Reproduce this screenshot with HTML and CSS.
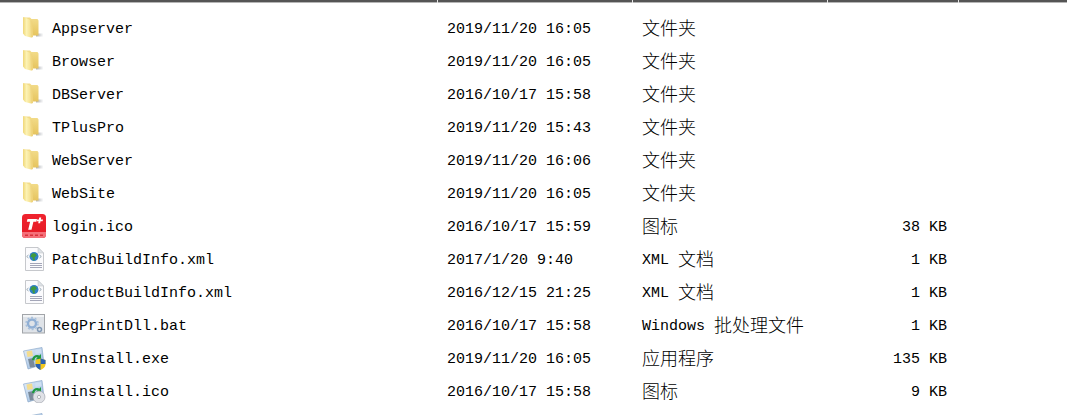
FILE: index.html
```html
<!DOCTYPE html>
<html lang="zh-CN">
<head>
<meta charset="utf-8">
<title>文件列表</title>
<link rel="stylesheet" href="styles.css">
</head>
<body>
<svg class="defs" width="0" height="0" aria-hidden="true">
  <defs>
    <linearGradient id="fback" x1="0" y1="0" x2="0" y2="1"><stop offset="0" stop-color="#f3dd8c"/><stop offset="1" stop-color="#e6c45e"/></linearGradient>
    <linearGradient id="ffront" x1="0" y1="0" x2="1" y2="0"><stop offset="0" stop-color="#f0d777"/><stop offset=".35" stop-color="#fcf2b4"/><stop offset="1" stop-color="#f0d67a"/></linearGradient>
    <linearGradient id="fshadow" x1="0" y1="0" x2="1" y2="0"><stop offset="0" stop-color="#a9adb3"/><stop offset="1" stop-color="#ffffff"/></linearGradient>
    <linearGradient id="red" x1="0" y1="0" x2="0" y2="1"><stop offset="0" stop-color="#f0232e"/><stop offset="1" stop-color="#e41a25"/></linearGradient>
    <linearGradient id="glass" x1="0" y1="0" x2="1" y2="1"><stop offset="0" stop-color="#e6f0fb"/><stop offset="1" stop-color="#8fb3dc"/></linearGradient>
    <symbol id="i-folder" viewBox="0 0 24 24">
      <path d="M14 17.500H21.500V20.500H14Z" fill="url(#fshadow)"/>
      <path d="M2 1.500H8L9.500 3H15.500L16.500 4.500V19.500H6L2 17Z" fill="url(#fback)"/>
      <path d="M1 1C4 2 8 3 10 5.500L11 21 9 21.500 3 20 1 17.500Z" fill="url(#ffront)"/>
      <path d="M10 5.500 11 21 9 21.500 8.300 4Z" fill="#eed27a" opacity=".7"/>
    </symbol>
    <symbol id="i-tplus" viewBox="0 0 24 24">
      <rect x="0" y="0" width="24" height="24" rx="3.500" fill="url(#red)"/>
      <path d="M0 18H24V20.500A3.500 3.500 0 0 1 20.500 24H3.500A3.500 3.500 0 0 1 0 20.500Z" fill="#f4717a"/>
      <path d="M5.500 5H15L14.300 7.800H11.400L9.500 15.800H6.200L8.100 7.800H4.800Z" fill="#fff"/>
      <path d="M17.200 3.500H19.200L18.900 5.500H21L20.600 7.300H18.500L18.100 9.300H16.200L16.600 7.300H14.600L15 5.500H16.900Z" fill="#fff"/>
      <path d="M3 20.500h3v1.500H3zM8 20.500h3v1.500H8zM13 20.500h3v1.500h-3zM18 20.500h3v1.500h-3z" fill="#d9303a"/>
    </symbol>
    <symbol id="i-xml" viewBox="0 0 24 24">
      <path d="M3.500 .5H16L21.500 6V23.500H3.500Z" fill="#fbfbfd" stroke="#c6c8cc"/>
      <path d="M16 .5V6H21.500Z" fill="#dfe3e8" stroke="#b9bcc2" stroke-width=".5"/>
      <circle cx="12" cy="9.500" r="4.500" fill="#2f7fc6"/>
      <path d="M10 6.500 13 6.300 14.800 8.500 12.500 10.500 13 13 11 13.500 10.500 10.500 8.300 9.500Z" fill="#3f9a3d"/>
      <path d="M6.500 8 4.700 9.500 6.500 11M17.500 8 19.300 9.500 17.500 11" fill="none" stroke="#8fa0ad" stroke-width=".9"/>
      <path d="M8 16.500H20M8 18.500H20M8 20.500H20" stroke="#a4a6b8" stroke-width="1.100"/>
    </symbol>
    <symbol id="i-bat" viewBox="0 0 24 24">
      <rect x=".5" y="1.500" width="22" height="18.500" fill="#dfe3e8" stroke="#a2a5a9"/>
      <rect x="1" y="2" width="21" height="2" fill="#f2f4f6"/>
      <g fill="none">
        <circle cx="10" cy="10.500" r="4" stroke="#90afd4" stroke-width="2.400"/>
        <circle cx="10" cy="10.500" r="6" stroke="#a8c0dc" stroke-width="1.500" stroke-dasharray="2 1.800"/>
        <circle cx="17.500" cy="16.500" r="2" stroke="#7f98b5" stroke-width="1.500"/>
      </g>
    </symbol>
    <symbol id="i-inst" viewBox="0 0 24 24">
      <path d="M1.500 5 20 1.500 22 18 6 23Z" fill="url(#glass)" stroke="#7f9fc2" stroke-width=".6"/>
      <path d="M4.500 5.500 10 4.500 11 10 5.500 11Z" fill="#f3dc8f"/>
      <path d="M13 4 19 3 19.500 7 13.500 8Z" fill="#cfe0f2"/>
      <path d="M6 13 11 12 13 21 8 21.500Z" fill="#7a8a9a"/>
      <path d="M10 14C10.500 9.500 14.500 8 17.500 9.500L19 8V13.500H13.500L15.500 11.500C14 11 12.500 11.800 12.500 14.500Z" fill="#1f9a3e"/>
    </symbol>
    <symbol id="i-shield" viewBox="0 0 24 24">
      <use href="#i-inst"/>
      <path d="M18.500 12.500 23.500 14V18.500C23.500 21 21 23 18.500 24 16 23 13.500 21 13.500 18.500V14Z" fill="#f2c81f"/>
      <path d="M18.500 12.500 23.500 14V18H18.500ZM18.500 18V24C16 23 13.500 21 13.500 18.500V18Z" fill="#2a62b4"/>
    </symbol>
    <symbol id="i-disc" viewBox="0 0 24 24">
      <use href="#i-inst"/>
      <circle cx="17" cy="18" r="6" fill="#dfe1e6" stroke="#9a9ea6" stroke-width=".6"/>
      <circle cx="17" cy="18" r="1.600" fill="#fff" stroke="#8a8e96" stroke-width=".6"/>
    </symbol>
  </defs>
</svg>

<div class="header">
  <div class="head-cell"></div>
  <div class="head-cell"></div>
  <div class="head-cell"></div>
  <div class="head-cell"></div>
</div>

<main class="list">
  <div class="row"><svg class="icon"><use href="#i-folder"/></svg><span class="name">Appserver</span><span class="date">2019/11/20 16:05</span><span class="type"><span class="cjk">文件夹</span></span><span class="size"></span></div>
  <div class="row"><svg class="icon"><use href="#i-folder"/></svg><span class="name">Browser</span><span class="date">2019/11/20 16:05</span><span class="type"><span class="cjk">文件夹</span></span><span class="size"></span></div>
  <div class="row"><svg class="icon"><use href="#i-folder"/></svg><span class="name">DBServer</span><span class="date">2016/10/17 15:58</span><span class="type"><span class="cjk">文件夹</span></span><span class="size"></span></div>
  <div class="row"><svg class="icon"><use href="#i-folder"/></svg><span class="name">TPlusPro</span><span class="date">2019/11/20 15:43</span><span class="type"><span class="cjk">文件夹</span></span><span class="size"></span></div>
  <div class="row"><svg class="icon"><use href="#i-folder"/></svg><span class="name">WebServer</span><span class="date">2019/11/20 16:06</span><span class="type"><span class="cjk">文件夹</span></span><span class="size"></span></div>
  <div class="row"><svg class="icon"><use href="#i-folder"/></svg><span class="name">WebSite</span><span class="date">2019/11/20 16:05</span><span class="type"><span class="cjk">文件夹</span></span><span class="size"></span></div>
  <div class="row"><svg class="icon"><use href="#i-tplus"/></svg><span class="name">login.ico</span><span class="date">2016/10/17 15:59</span><span class="type"><span class="cjk">图标</span></span><span class="size">38 KB</span></div>
  <div class="row"><svg class="icon"><use href="#i-xml"/></svg><span class="name">PatchBuildInfo.xml</span><span class="date">2017/1/20 9:40</span><span class="type"><span class="latin">XML</span><span class="cjk">文档</span></span><span class="size">1 KB</span></div>
  <div class="row"><svg class="icon"><use href="#i-xml"/></svg><span class="name">ProductBuildInfo.xml</span><span class="date">2016/12/15 21:25</span><span class="type"><span class="latin">XML</span><span class="cjk">文档</span></span><span class="size">1 KB</span></div>
  <div class="row"><svg class="icon"><use href="#i-bat"/></svg><span class="name">RegPrintDll.bat</span><span class="date">2016/10/17 15:58</span><span class="type"><span class="latin">Windows</span><span class="cjk">批处理文件</span></span><span class="size">1 KB</span></div>
  <div class="row"><svg class="icon"><use href="#i-shield"/></svg><span class="name">UnInstall.exe</span><span class="date">2019/11/20 16:05</span><span class="type"><span class="cjk">应用程序</span></span><span class="size">135 KB</span></div>
  <div class="row"><svg class="icon"><use href="#i-disc"/></svg><span class="name">Uninstall.ico</span><span class="date">2016/10/17 15:58</span><span class="type"><span class="cjk">图标</span></span><span class="size">9 KB</span></div>
  <div class="row"><svg class="icon"><use href="#i-inst"/></svg></div>
</main>
</body>
</html>
```
FILE: styles.css
```css
html, body {
  margin: 0;
  padding: 0;
  height: 100%;
  overflow: hidden;
  background: #fff;
}
body {
  width: 1067px;
  height: 415px;
  color: #000;
  font-family: "Liberation Mono", "Noto Sans CJK SC", monospace;
  font-size: 15px;
}
.defs {
  position: absolute;
}
.header {
  display: grid;
  grid-template-columns: 438px 195px 195px 131px 108px;
  height: 3px;
  background: linear-gradient(#555 0, #555 2px, #b5b5b5 2px, #b5b5b5 3px);
}
.head-cell {
  border-right: 1px solid #e8e8e8;
}
.list {
  display: flex;
  flex-direction: column;
  box-sizing: border-box;
  height: 412px;
  overflow: hidden;
  padding-top: 9px;
}
.row {
  display: grid;
  grid-template-columns: 22px 30px 395px 195px 110px 195px;
  height: 33px;
  flex: none;
  align-items: center;
  white-space: nowrap;
}
.icon {
  grid-column: 1 / span 2;
  width: 24px;
  height: 24px;
  margin-left: 22px;
  margin-bottom: 1px;
}
.name,
.date,
.size,
.latin {
  padding-top: 2px;
}
.name { grid-column: 3; }
.date { grid-column: 4; }
.type {
  grid-column: 5;
  display: flex;
  align-items: center;
  gap: 9px;
}
.size {
  grid-column: 6;
  text-align: right;
}
.cjk {
  font-family: "Noto Sans CJK SC", sans-serif;
  font-size: 18px;
  font-weight: 300;
  line-height: 1;
  padding-bottom: 4px;
}
```
